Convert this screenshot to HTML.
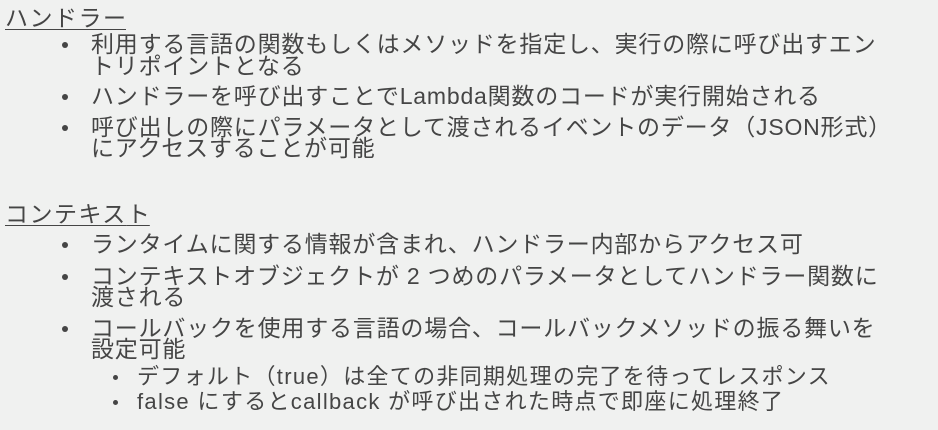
<!DOCTYPE html>
<html><head><meta charset="utf-8"><style>
body{margin:0;width:938px;height:430px;background:#f0f1f0;overflow:hidden;position:relative;font-family:"Liberation Sans","Noto Sans CJK JP",sans-serif;color:#454545}
.l{position:absolute;white-space:nowrap;font-size:23px;letter-spacing:0.8px;line-height:22px}
.s{font-size:22px;letter-spacing:1.3px}
.h{text-decoration:underline;text-underline-offset:3px;text-decoration-thickness:1px;letter-spacing:1.5px}
.h span{letter-spacing:0}
.b{position:absolute;width:6px;height:6px;border-radius:50%;background:#454545}
.sb{position:absolute;width:5px;height:5px;border-radius:50%;background:#454545}
</style></head><body>
<div class="l h" style="left:5px;top:7px">ハンドラ<span>ー</span></div>
<div class="b" style="left:62px;top:42px"></div>
<div class="l" style="left:91px;top:33px">利用する言語の関数もしくはメソッドを指定し、実行の際に呼び出すエン</div>
<div class="l" style="left:91px;top:55px">トリポイントとなる</div>
<div class="b" style="left:62px;top:94px"></div>
<div class="l" style="left:91px;top:85px">ハンドラーを呼び出すことでLambda関数のコードが実行開始される</div>
<div class="b" style="left:62px;top:125px"></div>
<div class="l" style="left:91px;top:116px">呼び出しの際にパラメータとして渡されるイベントのデータ（JSON形式）</div>
<div class="l" style="left:91px;top:137px">にアクセスすることが可能</div>
<div class="l h" style="left:5px;top:203px">コンテキス<span>ト</span></div>
<div class="b" style="left:62px;top:242px"></div>
<div class="l" style="left:91px;top:233px">ランタイムに関する情報が含まれ、ハンドラー内部からアクセス可</div>
<div class="b" style="left:62px;top:274px"></div>
<div class="l" style="left:91px;top:265px">コンテキストオブジェクトが 2 つめのパラメータとしてハンドラー関数に</div>
<div class="l" style="left:91px;top:286px">渡される</div>
<div class="b" style="left:62px;top:326px"></div>
<div class="l" style="left:91px;top:317px">コールバックを使用する言語の場合、コールバックメソッドの振る舞いを</div>
<div class="l" style="left:91px;top:338px">設定可能</div>
<div class="sb" style="left:113px;top:375px"></div>
<div class="l s" style="left:137px;top:366px">デフォルト（true）は全ての非同期処理の完了を待ってレスポンス</div>
<div class="sb" style="left:113px;top:400px"></div>
<div class="l s" style="left:137px;top:391px">false にするとcallback が呼び出された時点で即座に処理終了</div>
</body></html>
